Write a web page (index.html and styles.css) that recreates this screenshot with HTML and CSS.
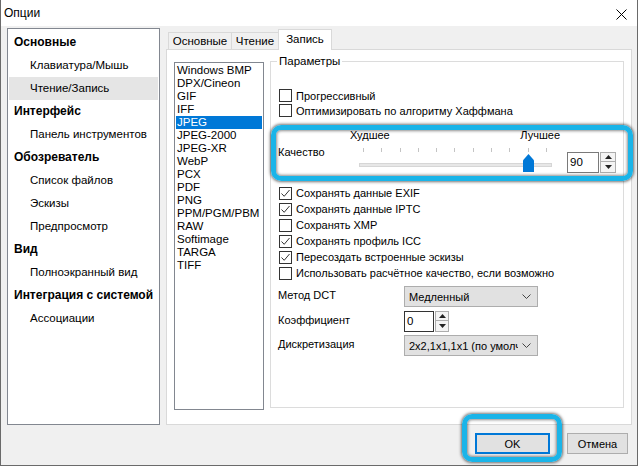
FILE: index.html
```html
<!DOCTYPE html>
<html lang="ru">
<head>
    <meta charset="UTF-8">
    <title>Опции</title>
    <link rel="stylesheet" href="styles.css">
</head>
<body>
    <div class="window">
        <div class="titlebar">
            <span class="title">Опции</span>
            <svg class="close" width="11" height="11" viewBox="0 0 11 11">
                <path d="M0.5 0.5 L10.5 10.5 M10.5 0.5 L0.5 10.5" stroke="#000" stroke-width="1" fill="none"/>
            </svg>
        </div>

        <div class="main">
            <!-- Дерево разделов -->
            <div class="tree">
                <div class="node head">Основные</div>
                <div class="node">Клавиатура/Мышь</div>
                <div class="node selected">Чтение/Запись</div>
                <div class="node head">Интерфейс</div>
                <div class="node">Панель инструментов</div>
                <div class="node head">Обозреватель</div>
                <div class="node">Список файлов</div>
                <div class="node">Эскизы</div>
                <div class="node">Предпросмотр</div>
                <div class="node head">Вид</div>
                <div class="node">Полноэкранный вид</div>
                <div class="node head">Интеграция с системой</div>
                <div class="node">Ассоциации</div>
            </div>

            <div class="tabs">
                <div class="tabstrip">
                    <div class="tab tab-main">Основные</div>
                    <div class="tab tab-read">Чтение</div>
                    <div class="tab tab-write active">Запись</div>
                </div>

                <div class="panel">
                    <div class="formats">
                        <div class="fmt">Windows BMP</div>
                        <div class="fmt">DPX/Cineon</div>
                        <div class="fmt">GIF</div>
                        <div class="fmt">IFF</div>
                        <div class="fmt selected">JPEG</div>
                        <div class="fmt">JPEG-2000</div>
                        <div class="fmt">JPEG-XR</div>
                        <div class="fmt">WebP</div>
                        <div class="fmt">PCX</div>
                        <div class="fmt">PDF</div>
                        <div class="fmt">PNG</div>
                        <div class="fmt">PPM/PGM/PBM</div>
                        <div class="fmt">RAW</div>
                        <div class="fmt">Softimage</div>
                        <div class="fmt">TARGA</div>
                        <div class="fmt">TIFF</div>
                    </div>

                    <div class="group">
                        <span class="legend">Параметры</span>

                        <label class="check top"><span class="box"></span>Прогрессивный</label>
                        <label class="check top"><span class="box"></span>Оптимизировать по алгоритму Хаффмана</label>

                        <div class="quality">
                            <span class="q-label">Качество</span>
                            <div class="slider">
                                <div class="slider-labels"><span class="worst">Худшее</span><span>Лучшее</span></div>
                                <div class="ticks">
                                    <i></i><i></i><i></i><i></i><i></i><i></i><i></i><i></i><i></i><i></i><i></i>
                                </div>
                                <div class="track"></div>
                                <div class="thumb"></div>
                            </div>
                            <div class="spin q-spin">
                                <div class="spin-field">90</div>
                                <div class="spin-buttons">
                                    <div class="spin-btn"><svg width="7" height="4" viewBox="0 0 7 4"><path d="M0 4 L3.5 0 L7 4Z" fill="#222"/></svg></div>
                                    <div class="spin-btn"><svg width="7" height="4" viewBox="0 0 7 4"><path d="M0 0 L3.5 4 L7 0Z" fill="#222"/></svg></div>
                                </div>
                            </div>
                        </div>

                        <label class="check"><span class="box checked"><svg width="11" height="11" viewBox="0 0 11 11"><path d="M1.5 5.5 L4.2 8.3 L9.5 2" stroke="#333" stroke-width="1" fill="none"/></svg></span>Сохранять данные EXIF</label>
                        <label class="check"><span class="box checked"><svg width="11" height="11" viewBox="0 0 11 11"><path d="M1.5 5.5 L4.2 8.3 L9.5 2" stroke="#333" stroke-width="1" fill="none"/></svg></span>Сохранять данные IPTC</label>
                        <label class="check"><span class="box"></span>Сохранять XMP</label>
                        <label class="check"><span class="box checked"><svg width="11" height="11" viewBox="0 0 11 11"><path d="M1.5 5.5 L4.2 8.3 L9.5 2" stroke="#333" stroke-width="1" fill="none"/></svg></span>Сохранять профиль ICC</label>
                        <label class="check"><span class="box checked"><svg width="11" height="11" viewBox="0 0 11 11"><path d="M1.5 5.5 L4.2 8.3 L9.5 2" stroke="#333" stroke-width="1" fill="none"/></svg></span>Пересоздать встроенные эскизы</label>
                        <label class="check"><span class="box"></span>Использовать расчётное качество, если возможно</label>

                        <div class="field dct">
                            <span class="f-label">Метод DCT</span>
                            <div class="select">
                                <span class="select-text">Медленный</span>
                                <svg width="9" height="5" viewBox="0 0 9 5"><path d="M0.5 0.5 L4.5 4.5 L8.5 0.5" stroke="#444" fill="none"/></svg>
                            </div>
                        </div>
                        <div class="field coef">
                            <span class="f-label">Коэффициент</span>
                            <div class="spin c-spin">
                                <div class="spin-field">0</div>
                                <div class="spin-buttons">
                                    <div class="spin-btn"><svg width="7" height="4" viewBox="0 0 7 4"><path d="M0 4 L3.5 0 L7 4Z" fill="#222"/></svg></div>
                                    <div class="spin-btn"><svg width="7" height="4" viewBox="0 0 7 4"><path d="M0 0 L3.5 4 L7 0Z" fill="#222"/></svg></div>
                                </div>
                            </div>
                        </div>
                        <div class="field disc">
                            <span class="f-label">Дискретизация</span>
                            <div class="select">
                                <span class="select-text">2x2,1x1,1x1 (по умолча</span>
                                <svg width="9" height="5" viewBox="0 0 9 5"><path d="M0.5 0.5 L4.5 4.5 L8.5 0.5" stroke="#444" fill="none"/></svg>
                            </div>
                        </div>
                    </div>
                </div>
            </div>
        </div>

        <div class="buttons">
            <button class="btn btn-ok">OK</button>
            <button class="btn btn-cancel">Отмена</button>
        </div>

        <!-- Выделения поверх окна -->
        <div class="mark mark-quality"></div>
        <div class="mark mark-ok"></div>
    </div>
</body>
</html>
```

FILE: styles.css
```css
body {
    margin: 0;
    font-family: "Liberation Sans", Arial, sans-serif;
    font-size: 12px;
    color: #000;
}
.window {
    position: relative;
    width: 636px;
    height: 465px;
    background-color: #f0f0f0;
    border-left: 1px solid #6a6a6a;
    border-right: 1px solid #6a6a6a;
    border-bottom: 1px solid #6a6a6a;
}
.titlebar {
    display: flex;
    align-items: center;
    justify-content: space-between;
    height: 26px;
    background-color: #fff;
    padding: 0 10px 0 3px;
}
.title {
    font-size: 12px;
}
.close {
    margin-top: 2px;
}
.main {
    display: flex;
    padding: 2px 0 0 6px;
}
/* Дерево слева */
.tree {
    box-sizing: border-box;
    width: 153px;
    height: 397px;
    background-color: #fff;
    border: 1px solid #828790;
    padding: 2px 1px 0;
    font-size: 11.5px;
}
.node {
    height: 23px;
    line-height: 23px;
    padding-left: 21px;
    white-space: nowrap;
}
.node.head {
    padding-left: 5px;
    font-weight: bold;
    font-size: 12px;
}
.node.selected {
    background-color: #e5e5e5;
}
/* Вкладки */
.tabs {
    margin-left: 6px;
    margin-top: 1px;
    width: 466px;
}
.tabstrip {
    display: flex;
    align-items: flex-end;
    height: 20px;
    padding-left: 2px;
    font-size: 11.5px;
}
.tab {
    box-sizing: border-box;
    height: 17px;
    border: 1px solid #d9d9d9;
    border-bottom: none;
    text-align: center;
    line-height: 17px;
}
.tab-main {
    width: 64px;
}
.tab-read {
    width: 48px;
    margin-left: -1px;
}
.tab-write {
    width: 54px;
    margin-left: -1px;
}
.tab.active {
    position: relative;
    z-index: 1;
    height: 21px;
    margin-bottom: -1px;
    background-color: #fff;
    line-height: 19px;
}
.panel {
    box-sizing: border-box;
    display: flex;
    align-items: flex-start;
    height: 376px;
    background-color: #fff;
    border: 1px solid #d9d9d9;
    padding: 11px 7px 0;
    font-size: 11px;
}
.formats {
    box-sizing: border-box;
    width: 90px;
    height: 348px;
    margin-top: 1px;
    border: 1px solid #828790;
    padding: 1px 1px 0;
    font-size: 11.5px;
}
.fmt {
    height: 13px;
    line-height: 13px;
    padding-left: 1px;
    white-space: nowrap;
}
.fmt.selected {
    background-color: #0078d7;
    color: #fff;
}
/* Группа параметров */
.group {
    position: relative;
    box-sizing: border-box;
    width: 354px;
    height: 347px;
    margin-left: 6px;
    border: 1px solid #dcdcdc;
    padding: 26px 7px 0;
}
.legend {
    position: absolute;
    top: -8px;
    left: 6px;
    padding: 0 2px;
    background-color: #fff;
    line-height: 15px;
    font-size: 11.5px;
}
.check {
    display: flex;
    align-items: center;
    height: 16px;
    white-space: nowrap;
}
.check.top {
    height: 15px;
}
.box {
    box-sizing: border-box;
    display: flex;
    align-items: center;
    justify-content: center;
    width: 13px;
    height: 13px;
    margin: 0 4px 0 1px;
    border: 1px solid #333;
    background-color: #fff;
}
.quality {
    display: flex;
    height: 67px;
}
.q-label {
    width: 75px;
    align-self: center;
}
.slider {
    position: relative;
    width: 210px;
    padding-top: 10px;
}
.slider-labels {
    display: flex;
    height: 14px;
    line-height: 14px;
}
.worst {
    width: 172px;
}
.ticks {
    display: flex;
    justify-content: space-between;
    width: 184px;
    height: 4px;
    margin: 6px 0 0 13px;
}
.ticks i {
    width: 1px;
    height: 4px;
    background-color: #c4c4c4;
}
.track {
    box-sizing: border-box;
    width: 193px;
    height: 4px;
    margin: 11px 0 0 9px;
    background-color: #e7e7e7;
    border: 1px solid #d6d6d6;
}
.thumb {
    position: absolute;
    left: 173px;
    top: 36px;
    width: 11px;
    height: 18px;
    background-color: #0078d7;
    clip-path: polygon(50% 0, 100% 35%, 100% 100%, 0 100%, 0 35%);
}
.spin {
    display: flex;
    height: 21px;
}
.q-spin {
    margin: 34px 0 0 7px;
}
.spin-field {
    box-sizing: border-box;
    height: 21px;
    border: 1px solid #7a7a7a;
    background-color: #fff;
    padding-left: 2px;
    line-height: 19px;
    font-size: 11.5px;
}
.q-spin .spin-field {
    width: 32px;
}
.c-spin .spin-field {
    width: 30px;
    border-color: #333;
}
.spin-buttons {
    display: flex;
    flex-direction: column;
    width: 16px;
    margin-left: 1px;
}
.c-spin .spin-buttons {
    width: 14px;
}
.spin-btn {
    box-sizing: border-box;
    display: flex;
    align-items: center;
    justify-content: center;
    height: 10px;
    border: 1px solid #adadad;
    background-color: #f4f4f4;
}
.spin-btn + .spin-btn {
    height: 11px;
    border-top: none;
}
.field {
    display: flex;
    align-items: center;
}
.f-label {
    width: 126px;
    padding-bottom: 3px;
}
.dct {
    margin-top: 5px;
}
.coef {
    margin-top: 4px;
}
.disc {
    margin-top: 3px;
}
.select {
    box-sizing: border-box;
    display: flex;
    align-items: center;
    gap: 4px;
    width: 134px;
    height: 21px;
    border: 1px solid #adadad;
    background-color: #e1e1e1;
    padding: 0 6px 0 4px;
}
.select-text {
    flex: 1;
    min-width: 0;
    overflow: hidden;
    white-space: nowrap;
}
.select svg {
    flex-shrink: 0;
}
/* Кнопки */
.buttons {
    display: flex;
    padding: 8px 0 0 474px;
}
.btn {
    box-sizing: border-box;
    height: 21px;
    font-family: "Liberation Sans", Arial, sans-serif;
    font-size: 11px;
    background-color: #e1e1e1;
    border: 1px solid #adadad;
    padding: 0;
    color: #000;
}
.btn-ok {
    width: 75px;
    border: 2px solid #0078d7;
}
.btn-cancel {
    width: 61px;
    margin-left: 17px;
}
/* Голубые рамки-выделения */
.mark {
    position: absolute;
    box-sizing: border-box;
    border: 5px solid #1ab4e8;
    border-radius: 10px;
    box-shadow: 0 0 3px 1px rgba(0, 0, 0, 0.55), inset 0 0 3px 1px rgba(0, 0, 0, 0.45);
}
.mark-quality {
    left: 270px;
    top: 125px;
    width: 362px;
    height: 56px;
}
.mark-ok {
    left: 461px;
    top: 414px;
    width: 100px;
    height: 48px;
}
```
